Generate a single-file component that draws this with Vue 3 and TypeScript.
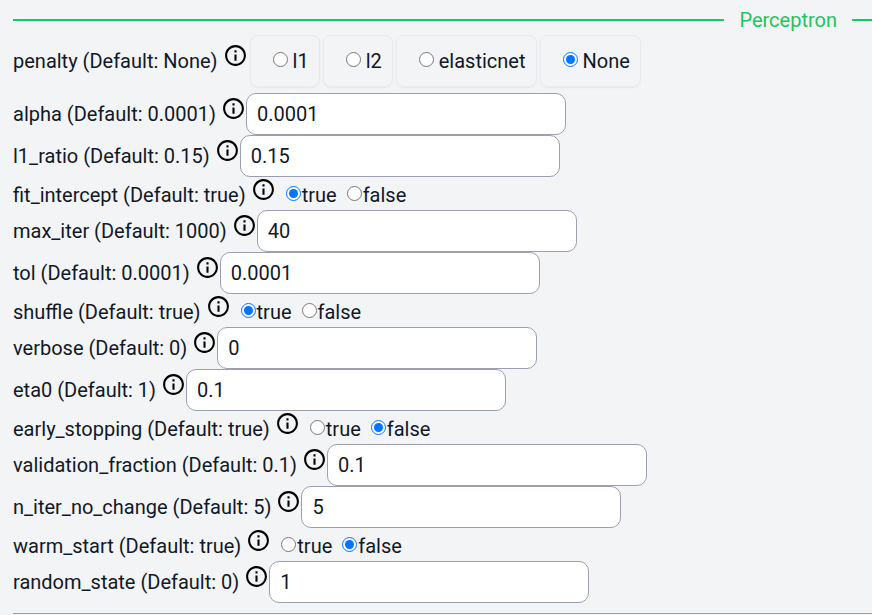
<script setup lang="ts">
import { reactive } from 'vue'

interface Param {
  name: string
  hint: string
  kind: 'choice' | 'text' | 'bool'
  options?: string[]
}

const params: Param[] = [
  { name: 'penalty', hint: 'None', kind: 'choice', options: ['l1', 'l2', 'elasticnet', 'None'] },
  { name: 'alpha', hint: '0.0001', kind: 'text' },
  { name: 'l1_ratio', hint: '0.15', kind: 'text' },
  { name: 'fit_intercept', hint: 'true', kind: 'bool', options: ['true', 'false'] },
  { name: 'max_iter', hint: '1000', kind: 'text' },
  { name: 'tol', hint: '0.0001', kind: 'text' },
  { name: 'shuffle', hint: 'true', kind: 'bool', options: ['true', 'false'] },
  { name: 'verbose', hint: '0', kind: 'text' },
  { name: 'eta0', hint: '1', kind: 'text' },
  { name: 'early_stopping', hint: 'true', kind: 'bool', options: ['true', 'false'] },
  { name: 'validation_fraction', hint: '0.1', kind: 'text' },
  { name: 'n_iter_no_change', hint: '5', kind: 'text' },
  { name: 'warm_start', hint: 'true', kind: 'bool', options: ['true', 'false'] },
  { name: 'random_state', hint: '0', kind: 'text' },
]

const values = reactive<Record<string, string>>({
  penalty: 'None',
  alpha: '0.0001',
  l1_ratio: '0.15',
  fit_intercept: 'true',
  max_iter: '40',
  tol: '0.0001',
  shuffle: 'true',
  verbose: '0',
  eta0: '0.1',
  early_stopping: 'false',
  validation_fraction: '0.1',
  n_iter_no_change: '5',
  warm_start: 'false',
  random_state: '1',
})
</script>

<template>
  <form class="panel" @submit.prevent>
    <h2 class="title">Perceptron</h2>
    <div
      v-for="p in params"
      :key="p.name"
      class="row"
      :class="p.kind"
      :role="p.kind === 'text' ? undefined : 'radiogroup'"
      :aria-labelledby="p.kind === 'text' ? undefined : p.name + '-label'"
    >
      <component
        :is="p.kind === 'text' ? 'label' : 'span'"
        :id="p.name + '-label'"
        class="name"
        :for="p.kind === 'text' ? p.name : undefined"
      >{{ p.name }} (Default: {{ p.hint }})</component>
      <svg class="info" viewBox="0 0 24 24" aria-hidden="true">
        <path
          d="M11 7h2v2h-2V7zm0 4h2v6h-2v-6zm1-9C6.48 2 2 6.48 2 12s4.48 10 10 10 10-4.48 10-10S17.52 2 12 2zm0 18c-4.41 0-8-3.59-8-8s3.59-8 8-8 8 3.59 8 8-3.59 8-8 8z"
        />
      </svg>
      <input v-if="p.kind === 'text'" :id="p.name" v-model="values[p.name]" class="field" type="text" />
      <div v-else class="options">
        <label v-for="o in p.options" :key="o" class="option">
          <input v-model="values[p.name]" type="radio" :name="p.name" :value="o" />
          <span>{{ o }}</span>
        </label>
      </div>
    </div>
    <hr class="rule" />
  </form>
</template>

<style>
body {
  background: #f3f4f6;
}
</style>

<style scoped>
.panel {
  padding: 5px 0 0 13px;
  font: 20px/30px Roboto, sans-serif;
  color: #111827;
}

.title {
  display: flex;
  align-items: center;
  gap: 15px;
  margin: 0;
  font-size: 20px;
  font-weight: 400;
  color: #22c55e;
}

.title::before,
.title::after {
  content: '';
  height: 2px;
  background: #22c55e;
}

.title::before {
  flex: 1;
}

.title::after {
  width: 20px;
}

.row {
  display: flex;
  align-items: center;
}

.row.choice {
  height: 58px;
  box-sizing: border-box;
  padding-bottom: 6px;
}

.row.bool {
  height: 33px;
}

.name {
  white-space: nowrap;
}

.bool .name,
.bool .option span {
  padding-top: 2px;
}

.info {
  flex: none;
  width: 25px;
  height: 25px;
  margin: 0 0 11px 5px;
  fill: #000;
}

.bool .info {
  margin-bottom: 9px;
}

.field {
  box-sizing: border-box;
  width: 320px;
  height: 42px;
  padding: 0 10px;
  border: 1px solid #9d9fb1;
  border-radius: 10px;
  background: #fff;
  font: inherit;
  color: inherit;
}

.options {
  display: flex;
}

.option {
  display: flex;
  align-items: center;
}

.option input {
  width: 15px;
  height: 15px;
  margin: 0;
}

.bool .options {
  gap: 10px;
  padding-left: 10px;
}

.bool .option {
  gap: 1px;
}

.bool .option input {
  margin-bottom: 1px;
}

.choice .options {
  gap: 3px;
  padding-left: 2px;
}

.choice .option {
  box-sizing: border-box;
  gap: 5px;
  height: 52px;
  padding: 0 10px 0 22px;
  border: 1px solid #e9eaec;
  border-radius: 8px;
  box-shadow: 0 1px 2px rgba(0, 0, 0, 0.06);
}

.choice .option input {
  margin-bottom: 3px;
}

.rule {
  height: 1px;
  margin: 10px 0 0;
  border: 0;
  background: #9d9fb1;
}
</style>
